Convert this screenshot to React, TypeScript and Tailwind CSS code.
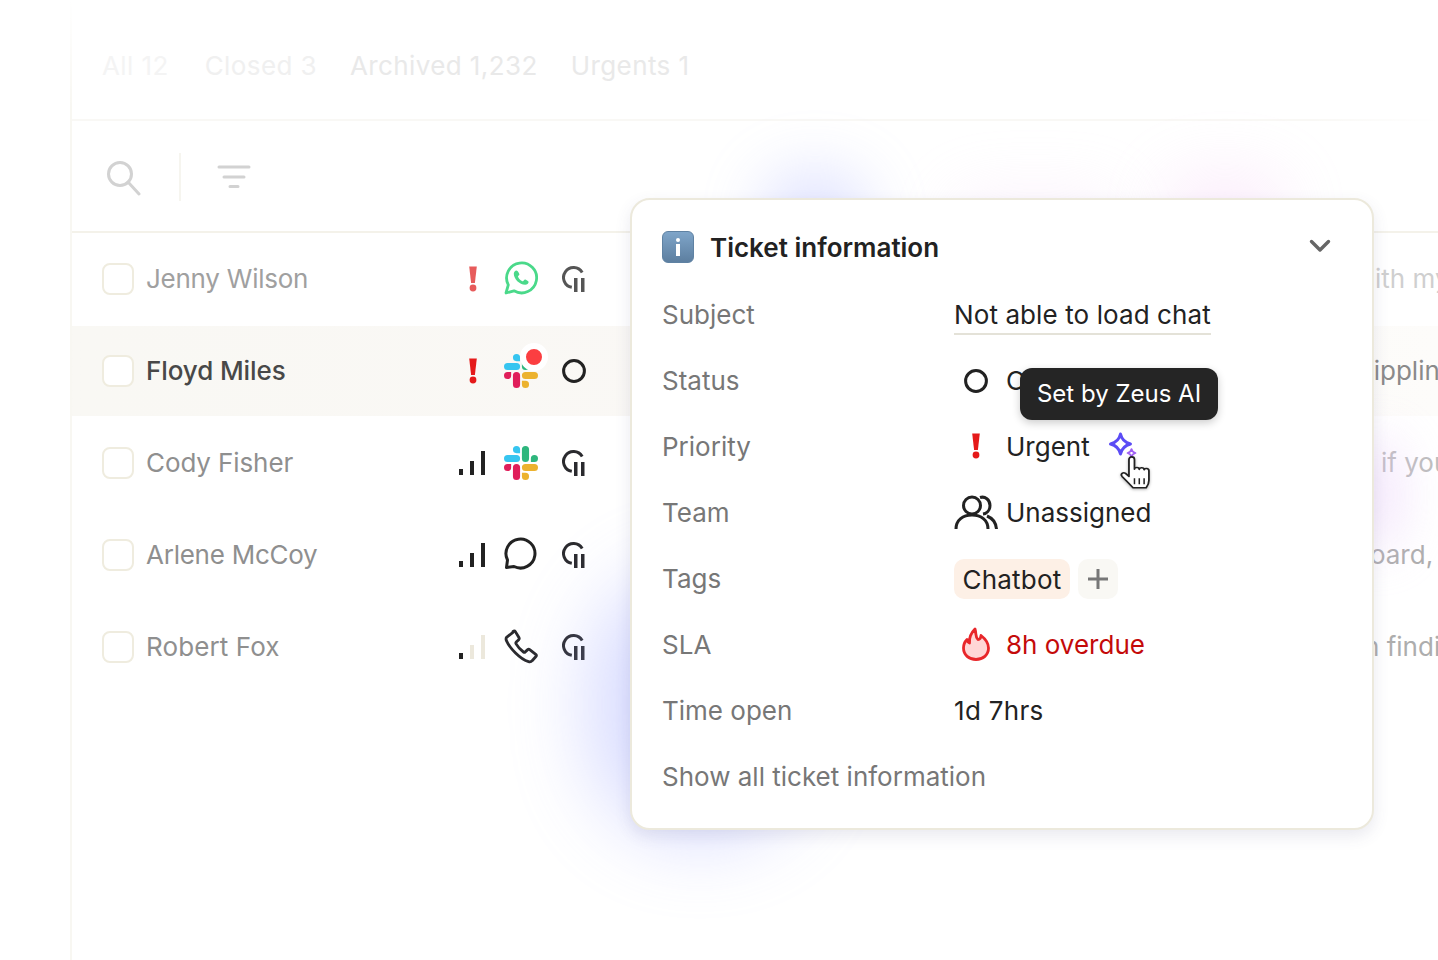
import React from "react";

const F = { fontFamily: "Inter, 'Liberation Sans', sans-serif" };

function Bang({ className = "" }: { className?: string }) {
  return (
    <svg width="10" height="26" viewBox="0 0 10 26" className={className}>
      <path d="M1.2 0.5h7.6L6.9 17H3.1z" fill="currentColor" />
      <circle cx="5" cy="22" r="3.4" fill="currentColor" />
    </svg>
  );
}
function Bars({ lit = 3 }: { lit?: number }) {
  return (
    <svg width="28" height="26" viewBox="0 0 28 26">
      <rect x="0" y="19" width="4" height="6" fill="#222" />
      <rect x="11" y="11" width="4" height="14" fill={lit > 1 ? "#222" : "#ece8dc"} />
      <rect x="22" y="1" width="4" height="24" fill={lit > 2 ? "#222" : "#ece8dc"} />
    </svg>
  );
}
function Gauge({ color = "#2a2a2e" }: { color?: string }) {
  return (
    <svg width="24" height="26" viewBox="0 0 24 26" fill="none">
      <path d="M20.2 6.500A10 10 0 1 0 9.800 21.350" stroke={color} strokeWidth="3" />
      <rect x="12" y="12" width="3.500" height="14" fill={color} />
      <rect x="19" y="12" width="3.500" height="14" fill={color} />
    </svg>
  );
}
function Ring({ size = 24 }: { size?: number }) {
  return (
    <svg width={size} height={size} viewBox="0 0 24 24" fill="none">
      <circle cx="12" cy="12" r="10.400" stroke="#222" strokeWidth="3" />
    </svg>
  );
}
function Slack() {
  return (
    <svg width="34" height="34" viewBox="0 0 122.8 122.8">
      <path d="M25.8 77.6a12.9 12.9 0 1 1-12.9-12.9h12.9zM32.3 77.6a12.9 12.9 0 0 1 25.8 0v32.3a12.9 12.9 0 0 1-25.8 0z" fill="#E01E5A" />
      <path d="M45.2 25.8a12.9 12.9 0 1 1 12.9-12.9v12.9zM45.2 32.3a12.9 12.9 0 0 1 0 25.8H12.9a12.9 12.9 0 0 1 0-25.8z" fill="#36C5F0" />
      <path d="M97 45.2a12.9 12.9 0 1 1 12.9 12.9H97zM90.5 45.2a12.9 12.9 0 0 1-25.8 0V12.9a12.9 12.9 0 0 1 25.8 0z" fill="#2EB67D" />
      <path d="M77.6 97a12.9 12.9 0 1 1-12.9 12.9V97zM77.6 90.5a12.9 12.9 0 0 1 0-25.8h32.3a12.9 12.9 0 0 1 0 25.8z" fill="#ECB22E" />
    </svg>
  );
}
function WhatsApp() {
  return (
    <svg className="mb-[2px]" width="34" height="34" viewBox="0 0 34 34" fill="none">
      <path d="M2 32l2.3-8.2A15 15 0 1 1 10 29.8z" stroke="#4ad98a" strokeWidth="2.800" strokeLinejoin="round" fill="#fff" />
      <path d="M12.4 9.6c-1.2 0-2.6 1.4-2.6 3.2 0 5 5.6 11 11.4 11 1.9 0 3.4-1.4 3.4-2.8 0-.8-3-2.4-3.6-2.4-.8 0-1.2 1.6-2 1.6-1.6 0-5-3.4-5-4.8 0-.8 1.4-1.2 1.4-2 0-.7-1.6-3.8-3-3.8z" fill="#4ad98a" />
    </svg>
  );
}
function Bubble() {
  return (
    <svg className="mb-[5px]" width="34" height="34" viewBox="0 0 34 34" fill="none">
      <path d="M2.500 31.500l1-7.500A14.500 14.500 0 1 1 10 30.500z" stroke="#222" strokeWidth="3" strokeLinejoin="round" />
    </svg>
  );
}
function Phone() {
  return (
    <svg width="36" height="36" viewBox="0 0 36 36" fill="none">
      <path d="M9.500 2.500L3 7.500c-1 1-1 2.500-.3 4C6 19 17 31 26 33.500c1.500.4 3 0 3.800-1l4-4.500c.6-.7.5-1.600-.2-2.200l-6.400-5c-.7-.5-1.500-.5-2.100 0l-2.600 2.400c-.5.5-1.300.5-1.900.1-2.800-2-6-5.500-7.800-8.600-.4-.7-.3-1.400.2-1.900l2.600-2.600c.6-.6.6-1.500.2-2.200l-3.600-6c-.5-.7-1.800-1-2.700-.5z" stroke="#2a2a2e" strokeWidth="3" strokeLinejoin="round" />
    </svg>
  );
}
function Sparkle() {
  return (
    <svg width="30" height="28" viewBox="0 0 30 28" fill="none">
      <path d="M13.500 2C14.700 7.500 17.500 10.500 23.500 12 17.500 13.500 14.700 16.500 13.500 22 12.300 16.500 9.500 13.500 3.500 12 9.500 10.500 12.300 7.500 13.500 2z" stroke="#5b4cf5" strokeWidth="3" strokeLinejoin="round" />
      <path d="M24.500 17c.5 2.300 1.500 3.400 4 4-2.500.6-3.500 1.700-4 4-.5-2.300-1.500-3.400-4-4 2.500-.6 3.500-1.700 4-4z" stroke="#a060f5" strokeWidth="1.700" strokeLinejoin="round" />
    </svg>
  );
}
function Hand() {
  return (
    <svg width="31" height="33" viewBox="2 1.500 22.500 27.500" preserveAspectRatio="none" fill="none" style={{ filter: "drop-shadow(0 1.500px 1.500px rgba(0,0,0,.3))" }}>
      <path d="M8.500 18.500V4.500c0-3 4-3 4 0v8c0-2 3.500-2 3.500.2 0-2 3.500-2 3.500.3 .2-1.700 3.500-1.500 3.500.8v8c0 3-.8 4.500-2 6.200H11.500c-1.500-2-4.500-5.500-8-9.500-1.500-2 .8-4 2.500-2.500z" fill="#fff" stroke="#222" strokeWidth="1.300" strokeLinejoin="round" />
      <path d="M12.500 20v5M16 20v5M19.500 20v5" stroke="#222" strokeWidth="1.100" />
    </svg>
  );
}
function Team() {
  return (
    <svg width="44" height="36" viewBox="0 0 44 36" fill="none" stroke="#222" strokeWidth="3">
      <circle cx="18" cy="11.500" r="8.500" />
      <path d="M2 35c0-9 7-14 16-14s16 5 16 14" />
      <path d="M26 3.500c5-1.500 10 2 10 8 0 5-3.500 8-7 8.500M33 22c5 2 9 6.500 9.500 13" />
    </svg>
  );
}
function Flame() {
  return (
    <svg width="30" height="34" viewBox="0 0 30 34" fill="none">
      <path d="M14 2c1.500 5 0 7.500 3 10.500 1.500 0 2.800-1.500 3-4 4.500 3.500 7.500 8 7.500 12.500 0 7-5.500 11.500-12.500 11.500S2.500 28 2.500 21c0-3 1.500-6.500 3.500-8.500.5 2 1 3 2.500 3.500C8 11 10 6 14 2z" fill="#ffd6d6" stroke="#e8262a" strokeWidth="2.800" strokeLinejoin="round" />
    </svg>
  );
}
function Info() {
  return (
    <span className="flex h-8 w-8 flex-col items-center justify-center gap-[2px] rounded-[6px] border border-[#5f82a3] bg-gradient-to-b from-[#7fa5c9] to-[#5d7fa0]">
      <span className="h-[4px] w-[4px] rounded-full bg-white" />
      <span className="h-[12px] w-[4px] bg-white" />
    </span>
  );
}

type Row = { name: string; nameCls: string; pri: "bang" | "bars" | "low"; ch: React.ReactNode; status: React.ReactNode; msg: string; pad: string; tone: string; active?: boolean; faded?: boolean };

const rows: Row[] = [
  { name: "Jenny Wilson", nameCls: "tracking-[-0.25px] text-[#a0a0a0]", pri: "bang", ch: <WhatsApp />, status: <Gauge color="#555" />, msg: "ith my", pad: "ml-[789px]", tone: "text-[#cfcfcf]", faded: true },
  { name: "Floyd Miles", nameCls: "font-medium tracking-[-0.1px] text-[#484848]", pri: "bang", ch: <span className="relative flex"><Slack /><span className="absolute right-[-10px] top-[-11px] h-7 w-7 rounded-full border-[6px] border-white bg-[#fb3e41]" /></span>, status: <Ring />, msg: "Rippling", pad: "ml-[771px]", tone: "text-[#8a8a8a]", active: true },
  { name: "Cody Fisher", nameCls: "tracking-[-0.1px] text-[#8f8f8f]", pri: "bars", ch: <Slack />, status: <Gauge />, msg: "if you", pad: "ml-[795px]", tone: "text-[#bdbdbd]" },
  { name: "Arlene McCoy", nameCls: "tracking-[-0.25px] text-[#8f8f8f]", pri: "bars", ch: <Bubble />, status: <Gauge />, msg: "board,", pad: "ml-[768px]", tone: "text-[#adadad]" },
  { name: "Robert Fox", nameCls: "tracking-[0.1px] text-[#8f8f8f]", pri: "low", ch: <Phone />, status: <Gauge />, msg: "n findi", pad: "ml-[778px]", tone: "text-[#adadad]" },
];

function TicketRow({ r }: { r: Row }) {
  return (
    <div className={`flex items-center whitespace-nowrap pl-[30px] ${r.active ? "my-[1px] h-[90px] bg-gradient-to-r from-[#f9f8f4] via-[#faf8f5] to-[#fdfcfa]" : "h-[92px]"}`}>
      <span className="h-8 w-8 shrink-0 rounded-[8px] border-2 border-[#efecdf] bg-white" />
      <span className={`mb-[2px] ml-[12px] w-[313px] shrink-0 text-[26px] ${r.nameCls}`}>{r.name}</span>
      <span className="flex w-[28px] shrink-0 justify-center">
        {r.pri === "bang" ? <Bang className={r.faded ? "text-[#e75b5b]" : "text-[#e51a1a]"} /> : <Bars lit={r.pri === "low" ? 1 : 3} />}
      </span>
      <span className="ml-[17px] flex w-[34px] shrink-0 justify-center">{r.ch}</span>
      <span className="ml-[24px] flex w-[24px] shrink-0 justify-center">{r.status}</span>
      <span className={`mb-[2px] ${r.pad} text-[26px] ${r.tone}`}>{r.msg}</span>
    </div>
  );
}

function Field({ label, children }: { label: string; children: React.ReactNode }) {
  return (
    <div className="flex h-[66px] items-center">
      <span className="w-[292px] shrink-0 text-[#777]">{label}</span>
      <div className="flex items-center">{children}</div>
    </div>
  );
}

export default function App() {
  return (
    <div style={F} className="relative h-[960px] w-[1438px] overflow-hidden bg-white">
      <div className="ml-[70px] flex h-full flex-col border-l-2 border-[#f8f7f2]">
        <div className="flex h-[50px] shrink-0 bg-white" />
        <div className="flex h-[71px] shrink-0 items-start border-b-2 border-[#f9f8f5] pl-[30px] text-[26px] leading-[32px] tracking-[0.4px] text-[#e9e9e9]">
          <span className="text-[#f4f4f4]">All 12</span>
          <span className="ml-[36px] text-[#f0f0f0]">Closed 3</span>
          <span className="ml-[33px]">Archived 1,232</span>
          <span className="ml-[33px]">Urgents 1</span>
        </div>
        <div className="flex h-[112px] shrink-0 items-center border-b-2 border-[#f4f2ea] pl-[33px]">
          <svg className="mt-[4px]" width="36" height="36" viewBox="0 0 36 36" fill="none" stroke="#d2d2d2" strokeWidth="3">
            <circle cx="15" cy="14" r="11.500" />
            <path d="M23 22l11 12" strokeLinecap="round" />
          </svg>
          <span className="ml-[38px] mt-[2px] h-[48px] w-[2px] bg-[#f6f5ef]" />
          <svg className="ml-[36px] mt-[2px]" width="34" height="26" viewBox="0 0 34 26" stroke="#d2d2d2" strokeWidth="3" strokeLinecap="round">
            <path d="M2 3h30M7 13h20M13 22.500h8" />
          </svg>
        </div>
        {rows.map((r) => <TicketRow key={r.name} r={r} />)}
      </div>

      {/* fades over the list */}
      <div className="absolute left-[60px] top-0 h-[110px] w-[24px] bg-gradient-to-b from-white to-transparent" />
      <div className="absolute right-0 top-0 h-[228px] w-[130px] bg-gradient-to-r from-transparent to-white" />

      {/* glows */}
      <div className="absolute left-[590px] top-[570px] h-[270px] w-[220px] rounded-full bg-[#a6aeff] opacity-45 blur-[40px]" />
      <div className="absolute left-[760px] top-[170px] h-[90px] w-[110px] rounded-full bg-[#aab2ff] opacity-35 blur-[30px]" />
      <div className="absolute left-[950px] top-[190px] h-[60px] w-[170px] rounded-full bg-[#f3d4f5] opacity-25 blur-[30px]" />
      <div className="absolute left-[1160px] top-[170px] h-[80px] w-[130px] rounded-full bg-[#f3c0f3] opacity-25 blur-[30px]" />
      <div className="absolute left-[1350px] top-[440px] h-[110px] w-[50px] rounded-full bg-[#e6c8f8] opacity-45 blur-[25px]" />

      {/* popover */}
      <div className="absolute left-[630px] top-[198px] h-[632px] w-[744px] rounded-[20px] border-2 border-[#ece9dc] bg-white pl-[30px] pr-[40px] text-[26px] text-[#222] shadow-[0_6px_16px_rgba(70,70,120,0.12)]">
        <div className="flex h-[81px] items-center justify-between pt-[13px]">
          <div className="flex items-center gap-[16px]">
            <Info />
            <span className="font-semibold text-[#222]">Ticket information</span>
          </div>
          <svg className="mb-[3px] mr-[1px]" width="22" height="14" viewBox="0 0 22 14" fill="none" stroke="#666" strokeWidth="3.400" strokeLinecap="round" strokeLinejoin="round"><path d="M2.500 2.500L11 11l8.500-8.500" /></svg>
        </div>
        <Field label="Subject"><span className="mt-[4px] border-b-2 border-[#e4e2d8] pb-[1px] leading-[34px] tracking-[0.1px]">Not able to load chat</span></Field>
        <Field label="Status"><span className="ml-[10px] mr-[18px] mt-[2px] flex"><Ring size={24} /></span><span>Open</span></Field>
        <Field label="Priority"><span className="ml-[17px] mr-[25px] flex"><Bang className="text-[#e51a1a]" /></span><span>Urgent</span><span className="relative ml-[17px] flex"><Sparkle /></span></Field>
        <Field label="Team"><span className="mr-[8px] flex"><Team /></span><span>Unassigned</span></Field>
        <Field label="Tags">
          <span className="mt-[2px] flex h-10 w-[116px] items-center justify-center rounded-[10px] bg-[#fdf0e6] tracking-[0.2px]">Chatbot</span>
          <span className="ml-[8px] mt-[2px] flex h-10 w-10 items-center justify-center rounded-[10px] bg-[#f9f8f4]">
            <svg width="20" height="20" viewBox="0 0 20 20" stroke="#777" strokeWidth="3"><path d="M10 0v20M0 10h20" /></svg>
          </span>
        </Field>
        <Field label="SLA"><span className="ml-[7px] mr-[15px] flex"><Flame /></span><span className="text-[#c40a0a]">8h overdue</span></Field>
        <Field label="Time open"><span className="tracking-[0.3px]">1d 7hrs</span></Field>
        <div className="flex h-[66px] items-center text-[#777]">Show all ticket information</div>
      </div>

      {/* tooltip + cursor */}
      <div className="absolute left-[1020px] top-[368px] flex h-[52px] w-[198px] items-center justify-center rounded-[12px] bg-[#252525] text-[24px] text-white shadow-[0_3px_8px_rgba(0,0,0,0.2)]">Set by Zeus AI</div>
      <div className="absolute left-[1120px] top-[456px]"><Hand /></div>
    </div>
  );
}
